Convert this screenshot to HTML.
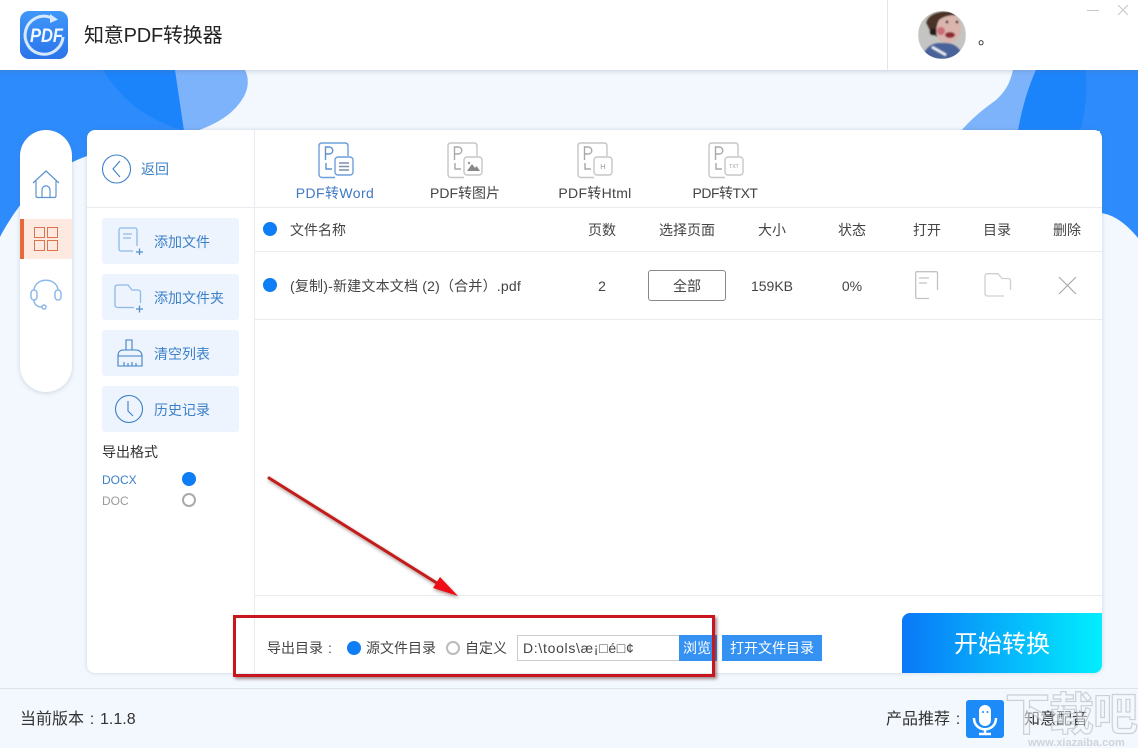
<!DOCTYPE html>
<html lang="zh-CN">
<head>
<meta charset="utf-8">
<title>知意PDF转换器</title>
<style>
html,body{margin:0;padding:0;width:1138px;height:748px;overflow:hidden;background:#f3f8fe}
body{position:relative;font-family:"Liberation Sans","Noto Sans CJK SC",sans-serif;color:#333}
.a{position:absolute}
.t{position:absolute;white-space:nowrap;line-height:20px;font-size:14px}
.c{text-align:center}
.line{position:absolute;background:#e8ebef}
.btn{position:absolute;left:102px;width:137px;height:46px;background:#edf4fd;border-radius:3px}
.btn .t{left:52px;top:14px;font-size:14px;color:#3c80c8}
.cl{display:inline-block;width:1em;text-align:center}
svg{position:absolute;overflow:visible}
</style>
</head>
<body>
<svg style="left:0;top:0" width="1138" height="748" viewBox="0 0 1138 748">
  <path d="M0 70H183L200 130L90 155C45 170 20 200 0 237Z" fill="#2e8bfb"/>
  <path d="M103 70H176L184 131C150 120 125 105 103 70Z" fill="#1c84fb"/>
  <path d="M175 70H245C249 78 249 88 243 98C232 116 215 124 197 131L184 131Z" fill="#7db3fb"/>
  <path d="M1013 70C1010 82 1007 90 996 100C985 108 972 118 961 131H1020L1036 70Z" fill="#7db3fb"/>
  <path d="M1036 70H1138V238C1125 222 1112 214 1100 213L1100 131H1018C1022 108 1028 88 1036 70Z" fill="#2e8bfb"/>
  <path d="M1036 70H1085C1088 90 1086 110 1080 131H1018C1022 108 1028 88 1036 70Z" fill="#1c84fb"/>
</svg>

<!-- Top bar -->
<div class="a" style="left:0;top:0;width:1138px;height:70px;background:#fff;box-shadow:0 1px 5px rgba(90,110,140,.3)"></div>
<div class="line" style="left:887px;top:0;width:1px;height:70px;background:#e6e6e6"></div>
<svg style="left:20px;top:11px" width="48" height="48" viewBox="0 0 48 48">
  <defs><linearGradient id="lg" x1="0" y1="0" x2="0" y2="1"><stop offset="0" stop-color="#3f97f8"/><stop offset="1" stop-color="#2b74ea"/></linearGradient></defs>
  <rect width="48" height="48" rx="9" fill="url(#lg)"/>
  <path d="M31 6.500A19 19 0 1 0 43 26" fill="none" stroke="#d5e8fd" stroke-width="3"/>
  <path d="M30 3L38 8.500L30 12Z" fill="#d5e8fd"/>
  <text x="10" y="31" textLength="33" lengthAdjust="spacingAndGlyphs" font-size="19" font-weight="700" font-style="italic" fill="#f2f8ff" font-family="Liberation Sans">PDF</text>
</svg>
<div class="t" style="left:84px;top:22px;font-size:20px;line-height:28px;color:#222;letter-spacing:-.2px">知意PDF转换器</div>

<svg style="left:918px;top:11px" width="48" height="48" viewBox="0 0 48 48">
  <defs>
    <clipPath id="av"><circle cx="24" cy="24" r="24"/></clipPath>
    <filter id="bl" x="-5%" y="-5%" width="110%" height="110%"><feGaussianBlur stdDeviation=".7"/></filter>
  </defs>
  <g clip-path="url(#av)"><g filter="url(#bl)">
    <rect width="48" height="48" fill="#c4c5c2"/>
    <path d="M4 48C6 36 15 31 24 32C34 31 43 35 46 48Z" fill="#49639a"/>
    <path d="M14 36L28 44" stroke="#e8edf3" stroke-width="2.500"/>
    <ellipse cx="30" cy="17" rx="13" ry="15" fill="#d9b5ad"/>
    <path d="M8 12C10 0 32-3 42 5C34 3 26 5 21 9C18 15 18 20 19 26L13 22Z" fill="#4c3026"/>
    <circle cx="15" cy="21" r="3.500" fill="#241c1c"/>
    <ellipse cx="32" cy="24" rx="5" ry="3" fill="#8f2b33"/>
    <ellipse cx="23" cy="20" rx="4" ry="4" fill="#c96d78"/>
    <circle cx="29" cy="11" r="1.400" fill="#3a2a2a"/><circle cx="39" cy="11" r="1.400" fill="#3a2a2a"/>
  </g></g>
</svg>
<div class="t" style="left:978px;top:30px;font-size:16px;color:#222">。</div>
<svg style="left:1087px;top:3px" width="44" height="16" viewBox="0 0 44 16">
  <path d="M0 7.500H12" stroke="#c4c8cc" stroke-width="1"/>
  <path d="M31 2L41 12M41 2L31 12" stroke="#c4c8cc" stroke-width="1"/>
</svg>

<!-- Left nav -->
<div class="a" style="left:20px;top:130px;width:52px;height:262px;background:#fff;border-radius:26px;box-shadow:0 1px 5px rgba(90,110,140,.25)"></div>
<div class="a" style="left:20px;top:219px;width:52px;height:40px;background:#fde9e0"></div>
<div class="a" style="left:20px;top:219px;width:4px;height:40px;background:#e8693c"></div>
<svg style="left:32px;top:170px" width="28" height="28" viewBox="0 0 28 28" fill="none" stroke="#5e93cf" stroke-width="1.200">
  <path d="M1 13L14 1L27 13"/><path d="M4 11V26C4 27 5 27.500 6 27.500H22C23 27.500 24 27 24 26V11"/><path d="M10 27V20C10 14.500 18 14.500 18 20V27"/>
</svg>
<svg style="left:34px;top:227px" width="24" height="24" viewBox="0 0 24 24" fill="none" stroke="#d9744d" stroke-width="1">
  <rect x=".5" y=".5" width="10" height="10"/><rect x="13.500" y=".5" width="10" height="10"/><rect x=".5" y="13.500" width="10" height="10"/><rect x="13.500" y="13.500" width="10" height="10"/>
</svg>
<svg style="left:30px;top:280px" width="32" height="30" viewBox="0 0 32 30" fill="none" stroke="#8db9ea" stroke-width="1.500">
  <path d="M4 10C5-3 27-3 28 10"/><rect x="1" y="10" width="6" height="10" rx="3"/><rect x="25" y="10" width="6" height="10" rx="3"/><path d="M4 20C4 25 8 27 12 27"/><circle cx="14" cy="27" r="2"/>
</svg>

<!-- Main card -->
<div class="a" style="left:87px;top:130px;width:1015px;height:543px;background:#fff;border-radius:8px;box-shadow:0 0 4px rgba(90,110,140,.25);overflow:hidden"></div>
<div class="line" style="left:254px;top:130px;width:1px;height:543px"></div>
<div class="line" style="left:87px;top:207px;width:1015px;height:1px"></div>
<div class="line" style="left:255px;top:251px;width:847px;height:1px"></div>
<div class="line" style="left:255px;top:319px;width:847px;height:1px"></div>
<div class="line" style="left:255px;top:595px;width:847px;height:1px"></div>

<svg style="left:102px;top:154px" width="30" height="30" viewBox="0 0 30 30" fill="none" stroke="#3c80c8" stroke-width="1.100">
  <circle cx="14.500" cy="15" r="14"/><path d="M18 7L11 15L18 23"/>
</svg>
<div class="t" style="left:141px;top:159px;color:#3c80c8">返回</div>

<div class="btn" style="top:218px"><div class="t">添加文件</div>
  <svg style="left:16px;top:9px" width="26" height="27" viewBox="0 0 26 27" fill="none" stroke="#8db9ea" stroke-width="1.300">
    <path d="M19 19V3C19 1.500 18 1 17 1H3C2 1 1 1.500 1 3V22C1 23 2 24 3 24H15"/><path d="M5 7H14M5 11H13"/><path d="M18 25H25M21.500 21.500V28" stroke="#4f8fd0"/>
  </svg>
</div>
<div class="btn" style="top:274px"><div class="t">添加文件夹</div>
  <svg style="left:12px;top:10px" width="30" height="27" viewBox="0 0 30 27" fill="none" stroke="#8db9ea" stroke-width="1.300">
    <path d="M20 23.500H4C2 23.500 1 22.500 1 21V4C1 2 2 1 4 1H14L18 6H24C25.500 6 26.500 7 26.500 8V19"/><path d="M22 25H29M25.500 21.500V28.500" stroke="#4f8fd0"/>
  </svg>
</div>
<div class="btn" style="top:330px"><div class="t">清空列表</div>
  <svg style="left:15px;top:9px" width="26" height="29" viewBox="0 0 26 29" fill="none" stroke="#3c80c8" stroke-width="1.100">
    <path d="M9 11V1H15V11"/><path d="M1 17C1 13 3 11 6 11H19C22 11 25 13 25 17V27H1Z"/><path d="M1 17H25M7 27V23M11 27V24M15 27V23M19 27V24"/>
  </svg>
</div>
<div class="btn" style="top:386px"><div class="t">历史记录</div>
  <svg style="left:13px;top:9px" width="28" height="28" viewBox="0 0 28 28" fill="none" stroke="#3c80c8" stroke-width="1.100">
    <circle cx="14" cy="14" r="13.500"/><path d="M13 6V16L18 21"/>
  </svg>
</div>

<div class="t" style="left:102px;top:442px;color:#333">导出格式</div>
<div class="t" style="left:102px;top:470px;font-size:12px;color:#3c80c8">DOCX</div>
<div class="t" style="left:102px;top:491px;font-size:12px;color:#999">DOC</div>
<div class="a" style="left:182px;top:472px;width:14px;height:14px;background:#0f7ef5;border-radius:50%"></div>
<div class="a" style="left:182px;top:493px;width:10px;height:10px;border:2px solid #aaa;border-radius:50%"></div>

<!-- Format tabs -->
<svg style="left:318px;top:142px" width="36" height="37" viewBox="0 0 36 37" fill="none" stroke="#6d9fdc" stroke-width="1.400">
  <path d="M30 14V4C30 2 29 1 27 1H4C2 1 1 2 1 4V32C1 34 2 35.500 4 35.500H17"/><rect x="17" y="15" width="18" height="18" rx="3" fill="#fff"/><path d="M21 21H31M21 24.500H31M21 28H31" stroke="#7d8fa8"/><path d="M7.500 18V5H11C16 5 16 12 11 12H7.500" stroke="#5f91d0"/><path d="M8 21V27H14" stroke="#5f91d0"/>
</svg>
<svg style="left:447px;top:142px" width="36" height="37" viewBox="0 0 36 37" fill="none" stroke="#c6c6c6" stroke-width="1.400">
  <path d="M30 14V4C30 2 29 1 27 1H4C2 1 1 2 1 4V32C1 34 2 35.500 4 35.500H17"/><rect x="17" y="15" width="18" height="18" rx="3" fill="#fff"/><path d="M20 29L25 22L28 26L29.500 24L33 29Z" fill="#888" stroke="none"/><circle cx="22" cy="21" r="1.200" fill="#999" stroke="none"/><path d="M7.500 18V5H11C16 5 16 12 11 12H7.500" stroke="#a8a8a8"/><path d="M8 21V27H14" stroke="#a8a8a8"/>
</svg>
<svg style="left:577px;top:142px" width="36" height="37" viewBox="0 0 36 37" fill="none" stroke="#c6c6c6" stroke-width="1.400">
  <path d="M30 14V4C30 2 29 1 27 1H4C2 1 1 2 1 4V32C1 34 2 35.500 4 35.500H17"/><rect x="17" y="15" width="18" height="18" rx="3" fill="#fff"/><path d="M7.500 18V5H11C16 5 16 12 11 12H7.500" stroke="#a8a8a8"/><path d="M8 21V27H14" stroke="#a8a8a8"/>
  <text x="26" y="27" text-anchor="middle" font-size="7.500" fill="#999" stroke="none">H</text>
</svg>
<svg style="left:708px;top:142px" width="36" height="37" viewBox="0 0 36 37" fill="none" stroke="#c6c6c6" stroke-width="1.400">
  <path d="M30 14V4C30 2 29 1 27 1H4C2 1 1 2 1 4V32C1 34 2 35.500 4 35.500H17"/><rect x="17" y="15" width="18" height="18" rx="3" fill="#fff"/><path d="M7.500 18V5H11C16 5 16 12 11 12H7.500" stroke="#a8a8a8"/><path d="M8 21V27H14" stroke="#a8a8a8"/>
  <text x="26" y="26" text-anchor="middle" font-size="5" fill="#999" stroke="none">TXT</text>
</svg>
<div class="t c" style="left:275px;top:183px;width:120px;color:#3f78c5;letter-spacing:.4px">PDF转Word</div>
<div class="t c" style="left:405px;top:183px;width:120px;color:#444">PDF转图片</div>
<div class="t c" style="left:535px;top:183px;width:120px;color:#444;letter-spacing:.3px">PDF转Html</div>
<div class="t c" style="left:665px;top:183px;width:120px;color:#444;letter-spacing:-.5px">PDF转TXT</div>

<!-- Table -->
<div class="a" style="left:263px;top:222px;width:14px;height:14px;background:#0f7ef5;border-radius:50%"></div>
<div class="a" style="left:263px;top:278px;width:14px;height:14px;background:#0f7ef5;border-radius:50%"></div>
<div class="t" style="left:290px;top:220px;color:#444">文件名称</div>
<div class="t c" style="left:572px;top:220px;width:60px;color:#444">页数</div>
<div class="t c" style="left:647px;top:220px;width:80px;color:#444">选择页面</div>
<div class="t c" style="left:742px;top:220px;width:60px;color:#444">大小</div>
<div class="t c" style="left:822px;top:220px;width:60px;color:#444">状态</div>
<div class="t c" style="left:897px;top:220px;width:60px;color:#444">打开</div>
<div class="t c" style="left:967px;top:220px;width:60px;color:#444">目录</div>
<div class="t c" style="left:1037px;top:220px;width:60px;color:#444">删除</div>

<div class="t" style="left:290px;top:276px;color:#444;letter-spacing:.2px">(复制)-新建文本文档 (2)（合并）.pdf</div>
<div class="t c" style="left:572px;top:276px;width:60px;color:#444">2</div>
<div class="a" style="left:648px;top:270px;width:76px;height:29px;border:1px solid #888;border-radius:3px"></div>
<div class="t c" style="left:648px;top:276px;width:78px;color:#444">全部</div>
<div class="t c" style="left:742px;top:276px;width:60px;color:#444">159KB</div>
<div class="t c" style="left:822px;top:276px;width:60px;color:#444">0%</div>
<svg style="left:915px;top:271px" width="24" height="28" viewBox="0 0 24 28" fill="none" stroke="#c2c2c2" stroke-width="1.300">
  <path d="M22.500 19V2C22.500 1 22 .7 21 .7H2C1 .7 .7 1 .7 2V26C.7 27 1 27.500 2 27.500H14"/><path d="M4 7H14M4 12H12"/>
</svg>
<svg style="left:984px;top:273px" width="28" height="24" viewBox="0 0 28 24" fill="none" stroke="#d0d0d0" stroke-width="1.300">
  <path d="M20 23H3C2 23 1 22 1 21V3C1 1.500 2 .7 3 .7H14L18 5.500H24C26 5.500 26.500 6.500 26.500 8V17"/>
</svg>
<svg style="left:1058px;top:276px" width="19" height="19" viewBox="0 0 19 19" fill="none" stroke="#aaa" stroke-width="1.200">
  <path d="M1 1L18 18M18 1L1 18"/>
</svg>

<!-- Export row -->
<div class="t" style="left:267px;top:638px;color:#444">导出目录<span class="cl">:</span></div>
<div class="a" style="left:347px;top:641px;width:14px;height:14px;background:#0f7ef5;border-radius:50%"></div>
<div class="t" style="left:366px;top:638px;color:#444">源文件目录</div>
<div class="a" style="left:446px;top:641px;width:10px;height:10px;border:2px solid #bbb;border-radius:50%"></div>
<div class="t" style="left:465px;top:638px;color:#444">自定义</div>
<div class="a" style="left:517px;top:635px;width:161px;height:24px;border:1px solid #ccc;background:#fff"></div>
<div class="t" style="left:523px;top:638px;color:#444;letter-spacing:.7px">D:\tools\æ¡□é□¢</div>
<div class="a" style="left:679px;top:635px;width:38px;height:26px;background:#3692f2"></div>
<div class="t" style="left:683px;top:638px;color:#fff">浏览</div>
<div class="a" style="left:722px;top:635px;width:100px;height:26px;background:#3692f2"></div>
<div class="t c" style="left:722px;top:638px;width:100px;color:#fff">打开文件目录</div>

<div class="a" style="left:902px;top:613px;width:200px;height:60px;border-radius:8px 0 8px 0;background:linear-gradient(90deg,#0a78f8,#02eefe)"></div>
<div class="t c" style="left:902px;top:630px;width:200px;font-size:24px;line-height:30px;color:#fff">开始转换</div>

<!-- Annotation -->
<div class="a" style="left:233px;top:615px;width:476px;height:56px;border:3px solid #c9151d;box-shadow:2px 2px 3px rgba(70,30,30,.5)"></div>
<svg style="left:0;top:0" width="1138" height="748" viewBox="0 0 1138 748">
  <defs><filter id="sh" x="-10%" y="-10%" width="120%" height="120%"><feDropShadow dx="1" dy="2" stdDeviation="1.500" flood-color="#503030" flood-opacity=".5"/></filter></defs>
  <g filter="url(#sh)">
    <path d="M269 478L440 585" stroke="#c21a1a" stroke-width="3" stroke-linecap="round"/>
    <path d="M458 596L433 588L440 577Z" fill="#ee0d12"/>
  </g>
</svg>

<!-- Footer -->
<div class="a" style="left:0;top:688px;width:1138px;height:1px;background:#dde3ea"></div>
<div class="t" style="left:20px;top:710px;font-size:16px;color:#333">当前版本<span class="cl">:</span>1.1.8</div>
<div class="t" style="left:886px;top:710px;font-size:16px;color:#333">产品推荐<span class="cl">:</span></div>
<svg style="left:966px;top:700px" width="38" height="38" viewBox="0 0 38 38">
  <rect width="38" height="38" rx="3" fill="#1c8bf8"/>
  <rect x="13" y="5" width="12" height="21" rx="6" fill="#fff"/>
  <circle cx="17" cy="12" r="1" fill="#1c8bf8"/><circle cx="21.500" cy="12" r="1" fill="#1c8bf8"/>
  <path d="M8 18C8 33 30 33 30 18M19 29V34M13 34H25" fill="none" stroke="#fff" stroke-width="2.500"/>
</svg>
<div class="t" style="left:1024px;top:710px;font-size:16px;color:#333">知意配音</div>

<!-- Watermark -->
<div class="t" style="left:1005px;top:690px;font-size:45px;line-height:50px;font-weight:700;color:rgba(243,248,254,.55);-webkit-text-stroke:1.200px rgba(170,175,180,.55);letter-spacing:-1px">下载吧</div>
<div class="t" style="left:1028px;top:737px;font-size:11px;line-height:12px;font-weight:700;color:rgba(170,175,180,.5)">www.xiazaiba.com</div>
</body>
</html>
